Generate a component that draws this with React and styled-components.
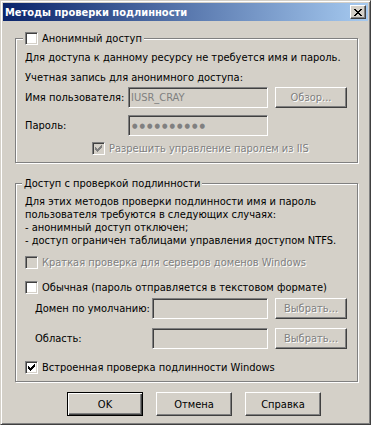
import React from 'react';
import styled, { createGlobalStyle } from 'styled-components';

const GlobalStyle = createGlobalStyle`
  body {
    margin: 0;
    background: #d4d0c8;
  }
`;

const FONT = `"DejaVu Sans Condensed", "Liberation Sans", sans-serif`;

const Window = styled.div`
  width: 371px;
  height: 425px;
  box-sizing: border-box;
  padding: 2px;
  display: flex;
  flex-direction: column;
  background: #d4d0c8;
  border: 1px solid;
  border-color: #d4d0c8 #404040 #404040 #d4d0c8;
  box-shadow: inset 1px 1px #fff, inset -1px -1px #808080;
  font: 11px ${FONT};
  color: #000;
`;

const TitleBar = styled.div`
  flex: none;
  height: 18px;
  display: flex;
  align-items: center;
  justify-content: space-between;
  padding: 0 2px;
  background: linear-gradient(to right, #0a246a, #a6caf0);
  color: #fff;
  font-weight: bold;
`;

const CloseBtn = styled.button`
  width: 16px;
  height: 14px;
  padding: 0;
  display: flex;
  align-items: center;
  justify-content: center;
  background: #d4d0c8;
  border: 1px solid;
  border-color: #fff #404040 #404040 #fff;
  box-shadow: inset -1px -1px #808080;
`;

const Body = styled.div`
  flex: 1;
  display: flex;
  flex-direction: column;
  padding: 11px 10px 0 12px;
`;

const Group = styled.fieldset`
  margin: ${(p) => p.$mt || 0}px 0 0 0;
  min-width: 0;
  width: 343px;
  box-sizing: border-box;
  padding: 0 9px 7px 9px;
  border: 1px solid #808080;
  box-shadow: inset 1px 1px #fff, 1px 1px #fff;
  display: flex;
  flex-direction: column;
`;

const Legend = styled.legend`
  height: 13px;
  line-height: 13px;
  padding: 0 2px;
  margin-left: ${(p) => p.$ml}px;
  display: flex;
  align-items: center;
  gap: 4px;
  background: #d4d0c8;
`;

const Line = styled.div`
  line-height: 13px;
  margin-top: ${(p) => p.$mt || 0}px;
  white-space: nowrap;
`;

const FieldRow = styled.div`
  display: flex;
  align-items: center;
  height: 21px;
  margin-top: ${(p) => p.$mt}px;
  padding-left: ${(p) => p.$indent || 0}px;
`;

const Label = styled.span`
  flex: none;
  width: ${(p) => p.$w}px;
`;

const Field = styled.div`
  flex: none;
  width: ${(p) => p.$w}px;
  height: 21px;
  box-sizing: border-box;
  padding-left: 2px;
  display: flex;
  align-items: center;
  background: #d4d0c8;
  color: #808080;
  border: 1px solid;
  border-color: #808080 #fff #fff #808080;
  box-shadow: inset 1px 1px #404040, inset -1px -1px #d4d0c8;
`;

const Dots = styled.span`
  font-size: 7px;
  letter-spacing: 2px;
  padding-left: 1px;
`;

const Btn = styled.button`
  flex: none;
  width: ${(p) => p.$w || 76}px;
  height: ${(p) => p.$h || 24}px;
  margin-left: ${(p) => p.$ml || 0}px;
  padding: 0;
  font: 11px ${FONT};
  background: #d4d0c8;
  color: ${(p) => (p.disabled ? '#808080' : '#000')};
  text-shadow: ${(p) => (p.disabled ? '1px 1px #fff' : 'none')};
  border: 1px solid;
  border-color: #fff #404040 #404040 #fff;
  box-shadow: inset -1px -1px #808080, inset 1px 1px #d4d0c8;
`;

const DefaultBtn = styled(Btn)`
  border-color: #000;
  box-shadow: inset 1px 1px #fff, inset -1px -1px #404040, inset -2px -2px #808080;
`;

const CheckRow = styled.div`
  display: flex;
  align-items: center;
  gap: 4px;
  height: 13px;
  margin-top: ${(p) => p.$mt || 0}px;
  padding-left: ${(p) => p.$indent || 0}px;
  white-space: nowrap;
`;

const Box = styled.span`
  flex: none;
  width: 13px;
  height: 13px;
  box-sizing: border-box;
  display: flex;
  align-items: center;
  justify-content: center;
  background: ${(p) => (p.$disabled ? '#d4d0c8' : '#fff')};
  border: 1px solid;
  border-color: #808080 #fff #fff #808080;
  box-shadow: inset 1px 1px #404040, inset -1px -1px #d4d0c8;
`;

const Text = styled.span`
  color: ${(p) => (p.$disabled ? '#808080' : '#000')};
  text-shadow: ${(p) => (p.$disabled ? '1px 1px #fff' : 'none')};
`;

const Footer = styled.div`
  display: flex;
  margin-top: 10px;
  padding-left: 52px;
  gap: 13px;
`;

// classic 7x7 check mark, one 3px column per x
const CHECK = [
  [0, 2], [1, 3], [2, 4], [3, 3], [4, 2], [5, 1], [6, 0],
];

const CheckMark = ({ color }) => (
  <svg width="7" height="7" viewBox="0 0 7 7" shapeRendering="crispEdges">
    {CHECK.map(([x, y]) => (
      <rect key={x} x={x} y={y} width="1" height="3" fill={color} />
    ))}
  </svg>
);

const CloseGlyph = () => (
  <svg width="8" height="7" viewBox="0 0 8 7" shapeRendering="crispEdges">
    {[0, 1, 2, 3, 4, 5, 6].map((r) => {
      const d = r <= 3 ? r : 6 - r;
      return (
        <g key={r}>
          <rect x={d} y={r} width="2" height="1" fill="#000" />
          <rect x={6 - d} y={r} width="2" height="1" fill="#000" />
        </g>
      );
    })}
  </svg>
);

const Check = ({ checked, disabled, label, mt, indent }) => (
  <CheckRow $mt={mt} $indent={indent}>
    <Box $disabled={disabled}>
      {checked && <CheckMark color={disabled ? '#808080' : '#000'} />}
    </Box>
    <Text $disabled={disabled}>{label}</Text>
  </CheckRow>
);

const App = () => {
  return (
    <>
      <GlobalStyle />
      <Window>
        <TitleBar>
          <span>Методы проверки подлинности</span>
          <CloseBtn>
            <CloseGlyph />
          </CloseBtn>
        </TitleBar>
        <Body>
          <Group>
            <Legend $ml={-2}>
              <Box />
              <span>Анонимный доступ</span>
            </Legend>
            <Line $mt={6}>Для доступа к данному ресурсу не требуется имя и пароль.</Line>
            <Line $mt={7}>Учетная запись для анонимного доступа:</Line>
            <FieldRow $mt={3}>
              <Label $w={103}>Имя пользователя:</Label>
              <Field $w={140}>IUSR_CRAY</Field>
              <Btn disabled $w={72} $h={21} $ml={7}>Обзор...</Btn>
            </FieldRow>
            <FieldRow $mt={7}>
              <Label $w={103}>Пароль:</Label>
              <Field $w={140}>
                <Dots>{'●'.repeat(10)}</Dots>
              </Field>
            </FieldRow>
            <Check mt={6} indent={67} checked disabled label="Разрешить управление паролем из IIS" />
          </Group>

          <Group $mt={14}>
            <Legend $ml={-3}>Доступ с проверкой подлинности</Legend>
            <Line $mt={5}>
              Для этих методов проверки подлинности имя и пароль
              <br />
              пользователя требуются в следующих случаях:
              <br />
              - анонимный доступ отключен;
              <br />
              - доступ ограничен таблицами управления доступом NTFS.
            </Line>
            <Check mt={9} disabled label="Краткая проверка для серверов доменов Windows" />
            <Check mt={12} label="Обычная (пароль отправляется в текстовом формате)" />
            <FieldRow $mt={4} $indent={10}>
              <Label $w={117}>Домен по умолчанию:</Label>
              <Field $w={116} />
              <Btn disabled $w={72} $h={21} $ml={7}>Выбрать...</Btn>
            </FieldRow>
            <FieldRow $mt={9} $indent={10}>
              <Label $w={117}>Область:</Label>
              <Field $w={116} />
              <Btn disabled $w={72} $h={21} $ml={7}>Выбрать...</Btn>
            </FieldRow>
            <Check mt={12} checked label="Встроенная проверка подлинности Windows" />
          </Group>

          <Footer>
            <DefaultBtn>OK</DefaultBtn>
            <Btn>Отмена</Btn>
            <Btn>Справка</Btn>
          </Footer>
        </Body>
      </Window>
    </>
  );
};

export default App;
